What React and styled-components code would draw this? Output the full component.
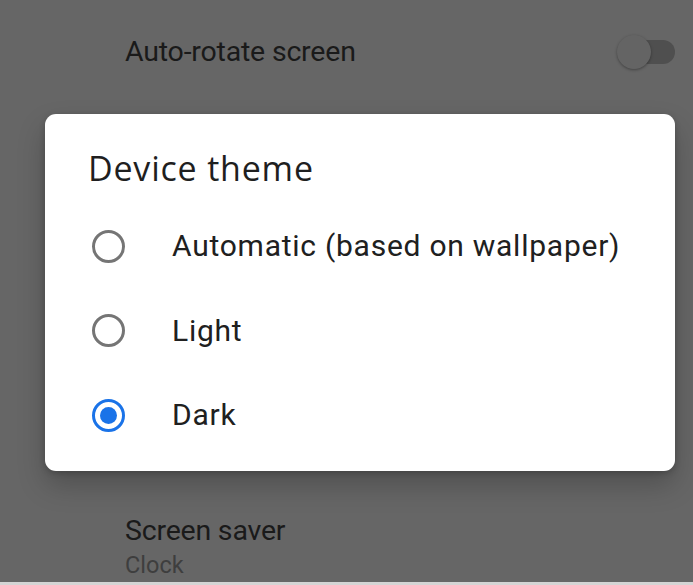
import React from "react";
import styled, { createGlobalStyle } from "styled-components";

const Global = createGlobalStyle`
  html, body { margin: 0; padding: 0; }
  body { background: #666666; font-family: Roboto, "Liberation Sans", sans-serif; }
  #root { width: 693px; height: 585px; overflow: hidden; }
`;

const Page = styled.div`
  position: relative;
  width: 693px;
  height: 585px;
  background: #666666;
  display: flex;
  flex-direction: column;
`;

const SettingsList = styled.div`
  flex: 1;
  display: flex;
  flex-direction: column;
  justify-content: space-between;
  padding: 34px 18px 0 125px;
`;

const SettingRow = styled.div`
  display: flex;
  align-items: center;
  justify-content: space-between;
`;

const SettingText = styled.div`
  display: flex;
  flex-direction: column;
`;

const SettingTitle = styled.div`
  font-size: 28.5px;
  line-height: 34px;
  color: #1a1a1a;
  letter-spacing: -0.2px;
`;

const SettingSummary = styled.div`
  font-size: 23.5px;
  line-height: 34px;
  color: #3e3e3e;
`;

const Toggle = styled.div`
  position: relative;
  width: 58px;
  height: 36px;
  display: flex;
  align-items: center;
  justify-content: flex-end;
`;

const Track = styled.div`
  width: 44px;
  height: 24px;
  border-radius: 12px;
  background: #4f4f4f;
`;

const Thumb = styled.div`
  position: absolute;
  left: 0;
  top: 1px;
  width: 34px;
  height: 34px;
  border-radius: 50%;
  background: #646464;
  box-shadow: 0 1px 3px rgba(0, 0, 0, 0.35);
`;

const BottomStrip = styled.div`
  height: 3px;
  background: #d4d4d4;
`;

const Dialog = styled.div`
  position: absolute;
  left: 45px;
  top: 114px;
  width: 630px;
  height: 357px;
  box-sizing: border-box;
  background: #ffffff;
  border-radius: 11px;
  box-shadow: 0 14px 28px rgba(0, 0, 0, 0.22), 0 2px 6px rgba(0, 0, 0, 0.2);
  padding: 32px 0 0 0;
  display: flex;
  flex-direction: column;
`;

const DialogTitle = styled.div`
  font-family: "Open Sans", Roboto, sans-serif;
  font-size: 34px;
  line-height: 44px;
  color: #1f1f1f;
  padding-left: 43px;
  margin-bottom: 14px;
  letter-spacing: 0.8px;
`;

const Options = styled.div`
  display: flex;
  flex-direction: column;
`;

const Option = styled.div`
  height: 84.5px;
  display: flex;
  align-items: center;
  padding-left: 47px;
  gap: 47px;
`;

const Radio = styled.div`
  width: 33px;
  height: 33px;
  box-sizing: border-box;
  border-radius: 50%;
  border: 3px solid ${(p) => (p.$checked ? "#1a73e8" : "#757575")};
  display: flex;
  align-items: center;
  justify-content: center;
  flex-shrink: 0;
`;

const Dot = styled.div`
  width: 17px;
  height: 17px;
  border-radius: 50%;
  background: #1a73e8;
`;

const OptionLabel = styled.div`
  font-size: 30px;
  line-height: 36px;
  letter-spacing: 0.75px;
  color: #202020;
`;

const options = [
  { label: "Automatic (based on wallpaper)", checked: false },
  { label: "Light", checked: false },
  { label: "Dark", checked: true },
];

export default function App() {
  return (
    <>
      <Global />
      <Page>
        <SettingsList>
          <SettingRow>
            <SettingText>
              <SettingTitle>Auto-rotate screen</SettingTitle>
            </SettingText>
            <Toggle>
              <Track />
              <Thumb />
            </Toggle>
          </SettingRow>
          <SettingRow>
            <SettingText>
              <SettingTitle>Screen saver</SettingTitle>
              <SettingSummary>Clock</SettingSummary>
            </SettingText>
          </SettingRow>
        </SettingsList>
        <BottomStrip />
        <Dialog>
          <DialogTitle>Device theme</DialogTitle>
          <Options>
            {options.map((o) => (
              <Option key={o.label}>
                <Radio $checked={o.checked}>{o.checked && <Dot />}</Radio>
                <OptionLabel>{o.label}</OptionLabel>
              </Option>
            ))}
          </Options>
        </Dialog>
      </Page>
    </>
  );
}
